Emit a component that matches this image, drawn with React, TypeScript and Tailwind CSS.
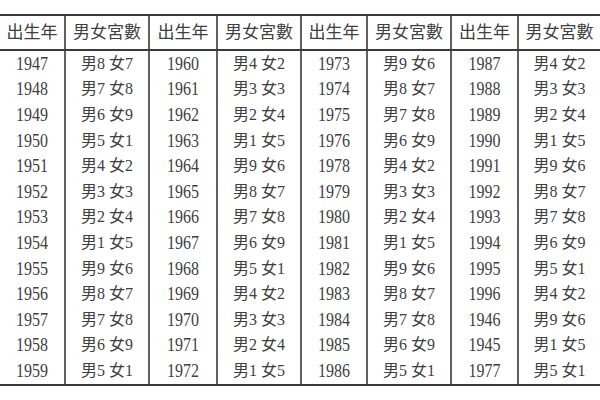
import React from 'react';

type Pair = [string, string];

const groups: Pair[][] = [
  [
    ['1947', '男8 女7'], ['1948', '男7 女8'], ['1949', '男6 女9'], ['1950', '男5 女1'],
    ['1951', '男4 女2'], ['1952', '男3 女3'], ['1953', '男2 女4'], ['1954', '男1 女5'],
    ['1955', '男9 女6'], ['1956', '男8 女7'], ['1957', '男7 女8'], ['1958', '男6 女9'],
    ['1959', '男5 女1'],
  ],
  [
    ['1960', '男4 女2'], ['1961', '男3 女3'], ['1962', '男2 女4'], ['1963', '男1 女5'],
    ['1964', '男9 女6'], ['1965', '男8 女7'], ['1966', '男7 女8'], ['1967', '男6 女9'],
    ['1968', '男5 女1'], ['1969', '男4 女2'], ['1970', '男3 女3'], ['1971', '男2 女4'],
    ['1972', '男1 女5'],
  ],
  [
    ['1973', '男9 女6'], ['1974', '男8 女7'], ['1975', '男7 女8'], ['1976', '男6 女9'],
    ['1978', '男4 女2'], ['1979', '男3 女3'], ['1980', '男2 女4'], ['1981', '男1 女5'],
    ['1982', '男9 女6'], ['1983', '男8 女7'], ['1984', '男7 女8'], ['1985', '男6 女9'],
    ['1986', '男5 女1'],
  ],
  [
    ['1987', '男4 女2'], ['1988', '男3 女3'], ['1989', '男2 女4'], ['1990', '男1 女5'],
    ['1991', '男9 女6'], ['1992', '男8 女7'], ['1993', '男7 女8'], ['1994', '男6 女9'],
    ['1995', '男5 女1'], ['1996', '男4 女2'], ['1946', '男9 女6'], ['1945', '男1 女5'],
    ['1977', '男5 女1'],
  ],
];

const cols = 'grid grid-cols-[66px_84px_68px_84px_66px_84px_67px_1fr]';
const font = { fontFamily: '"Liberation Serif", "Noto Sans CJK TC", serif' };

function Cell({ text, last, header, year }: { text: string; last: boolean; header?: boolean; year?: boolean }) {
  return (
    <div
      className={`flex items-center justify-center whitespace-nowrap text-[#404040] ${
        header ? 'text-[17px]' : 'text-[16px]'
      } ${last ? '' : 'border-r-2 border-[#606060]'}`}
    >
      <span className={year ? 'inline-block scale-y-[1.15]' : ''}>{text}</span>
    </div>
  );
}

export default function App() {
  const headers = ['出生年', '男女宮數', '出生年', '男女宮數', '出生年', '男女宮數', '出生年', '男女宮數'];
  return (
    <div className="w-[600px] h-[400px] bg-white overflow-hidden pt-[14px]" style={font}>
      <div className="border-t-2 border-b-2 border-[#3a3a3a]">
        <div className={`${cols} h-[35px] border-b-2 border-[#3a3a3a]`}>
          {headers.map((h, i) => (
            <Cell key={i} text={h} last={i === 7} header />
          ))}
        </div>
        {groups[0].map((_, r) => (
          <div key={r} className={`${cols} h-[25.6px]`}>
            {groups.flatMap((g, gi) => [
              <Cell key={`${gi}y`} text={g[r][0]} last={false} year />,
              <Cell key={`${gi}v`} text={g[r][1]} last={gi === 3} />,
            ])}
          </div>
        ))}
      </div>
    </div>
  );
}
